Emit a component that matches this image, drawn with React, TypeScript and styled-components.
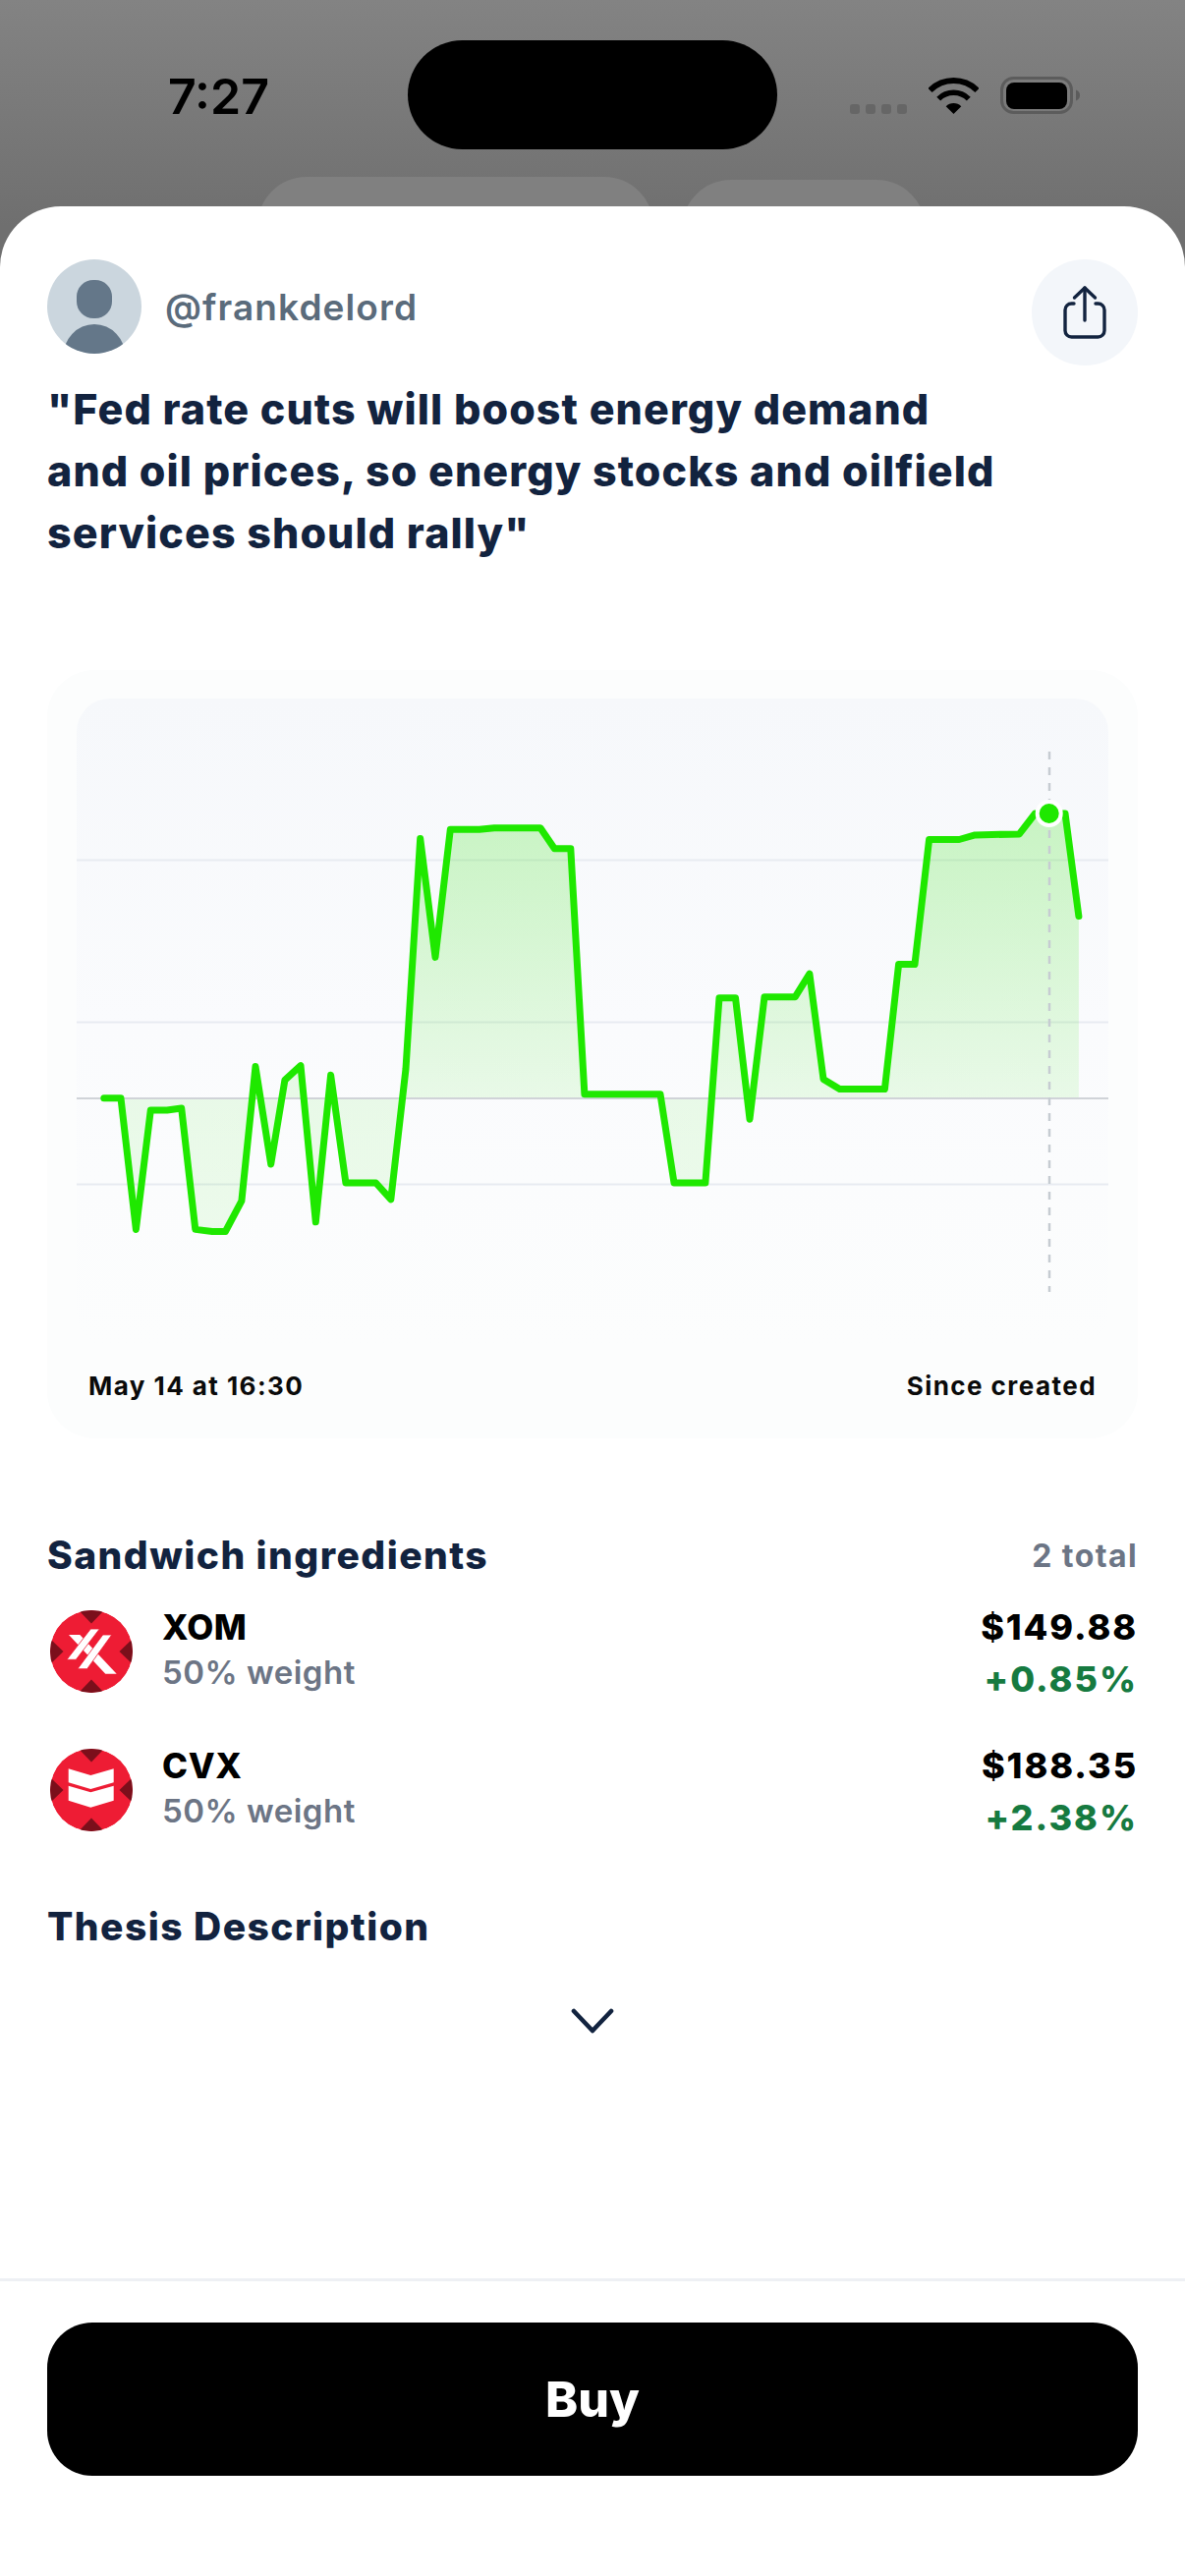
import React from "react";
import styled, { createGlobalStyle } from "styled-components";

const Global = createGlobalStyle`
  html, body { margin: 0; padding: 0; background: #fff; }
  * { box-sizing: border-box; }
  body { font-family: "Inter", "Liberation Sans", sans-serif; }
`;

const Page = styled.div`
  width: 1206px;
  height: 2622px;
  overflow: hidden;
  display: flex;
  flex-direction: column;
  background: linear-gradient(180deg, #838383 0px, #6f6f6f 230px);
`;
const Backdrop = styled.div`
  height: 210px;
  flex: none;
  overflow: hidden;
`;
const StatusBar = styled.div`
  display: grid;
  grid-template-columns: 415px 376px 1fr;
  padding-top: 41px;
  height: 152px;
`;
const TimeSlot = styled.div`
  padding: 29px 0 0 171px;
`;
const Time = styled.div`
  font-family: "Inter", sans-serif;
  font-size: 50px;
  font-weight: 600;
  line-height: 56px;
  color: #000;
`;
const Island = styled.div`
  background: #000;
  border-radius: 56px;
  height: 111px;
`;
const StatusIcons = styled.div`
  display: flex;
  align-items: flex-end;
  padding: 37px 0 0 74px;
  height: 76px;
`;
const SignalDots = styled.div`
  display: flex;
  gap: 6px;
  margin-bottom: 1px;
`;
const SignalDot = styled.span`
  width: 10px;
  height: 10px;
  border-radius: 3px;
  background: #666;
`;
const WifiIcon = styled.svg`
  margin: 0 22px 1px 22px;
  display: block;
`;
const BatteryIcon = styled.svg`
  display: block;
`;
const GhostRow = styled.div`
  display: flex;
  gap: 29px;
  padding-left: 262px;
  margin-top: 28px;
`;
const GhostTab = styled.div<{ $w: number; $nudge: number }>`
  width: ${(p) => p.$w}px;
  height: 100px;
  margin-top: ${(p) => p.$nudge}px;
  border-radius: 56px;
  background: #808080;
`;

const Sheet = styled.div`
  flex: 1;
  background: #fff;
  border-radius: 62px 62px 0 0;
  display: flex;
  flex-direction: column;
`;
const Body = styled.div`
  flex: 1;
  padding: 54px 48px 0;
  display: flex;
  flex-direction: column;
`;
const AuthorRow = styled.div`
  display: flex;
  justify-content: space-between;
  align-items: flex-start;
`;
const Author = styled.div`
  display: flex;
  align-items: center;
  gap: 24px;
`;
const Avatar = styled.svg`
  display: block;
`;
const Handle = styled.span`
  font-size: 37px;
  font-weight: 600;
  color: #5a6b7b;
  letter-spacing: 1.1px;
`;
const ShareButton = styled.button`
  width: 108px;
  height: 108px;
  border: 0;
  padding: 0;
  border-radius: 50%;
  background: #f3f6fa;
  display: flex;
  align-items: center;
  justify-content: center;
`;
const Title = styled.h1`
  margin: 13px 0 0;
  font-size: 43px;
  line-height: 63px;
  font-weight: 800;
  color: #12233f;
  letter-spacing: 1.1px;
`;
const ChartCard = styled.div`
  margin-top: 108px;
  height: 782px;
  border-radius: 48px;
  padding: 29px 30px 0;
  background: #fcfdfd;
`;
const Plot = styled.div`
  height: 660px;
  border-radius: 34px;
  background: linear-gradient(180deg, #f6f8fb 0%, #fafbfd 50%, #fcfdfd 100%);
`;
const ChartSvg = styled.svg`
  display: block;
`;
const ChartLabels = styled.div`
  display: flex;
  justify-content: space-between;
  padding: 24px 12px 0;
`;
const ChartLabel = styled.span`
  font-size: 26px;
  line-height: 32px;
  font-weight: 700;
  color: #0a0a0a;
  letter-spacing: 1.45px;
`;
const SectionHead = styled.div<{ $top: number }>`
  display: flex;
  justify-content: space-between;
  align-items: center;
  margin-top: ${(p) => p.$top}px;
  height: 46px;
`;
const SectionTitle = styled.h2`
  margin: 0;
  font-size: 39px;
  line-height: 46px;
  font-weight: 800;
  color: #12233f;
  letter-spacing: 1.45px;
`;
const SectionCount = styled.span`
  font-size: 32px;
  font-weight: 700;
  color: #6c7585;
  letter-spacing: 1.4px;
`;
const Holdings = styled.div`
  display: flex;
  flex-direction: column;
  gap: 57px;
  margin-top: 33px;
`;
const Holding = styled.div`
  display: flex;
  align-items: flex-start;
  height: 84px;
  padding-left: 3px;
`;
const Logo = styled.svg`
  display: block;
  flex: none;
`;
const Info = styled.div`
  flex: 1;
  margin-left: 30px;
  display: flex;
  flex-direction: column;
  gap: 9px;
`;
const Ticker = styled.span`
  font-size: 35px;
  line-height: 34px;
  font-weight: 800;
  color: #000;
  letter-spacing: 0.6px;
`;
const Weight = styled.span`
  font-size: 33px;
  line-height: 40px;
  font-weight: 600;
  color: #6c7585;
  letter-spacing: 0.5px;
`;
const Quote = styled.div`
  display: flex;
  flex-direction: column;
  align-items: flex-end;
  gap: 18px;
`;
const Price = styled.span`
  font-size: 36px;
  line-height: 34px;
  font-weight: 800;
  color: #000;
  letter-spacing: 1.9px;
`;
const Change = styled.span`
  font-size: 36px;
  line-height: 36px;
  font-weight: 800;
  color: #167a40;
  letter-spacing: 2px;
`;
const Expand = styled.div`
  display: flex;
  justify-content: center;
  margin-top: 60px;
`;
const Footer = styled.div`
  border-top: 3px solid #eef0f4;
  padding: 42px 48px 102px;
`;
const BuyButton = styled.button`
  width: 100%;
  height: 156px;
  border: 0;
  border-radius: 46px;
  background: #000;
  color: #fff;
  font-family: "Inter", sans-serif;
  font-size: 50px;
  font-weight: 800;
`;

const points: [number, number][] = [
  [105.8, 1117.8], [123, 1117.8], [138.4, 1251.4], [153.3, 1130], [170, 1130], [184.7, 1128],
  [198.8, 1251.4], [216, 1253.5], [229.4, 1253.5], [245.9, 1222.3], [260, 1085.6], [275.7, 1185],
  [289.9, 1099.4], [306, 1084.6], [321.3, 1243.8], [336.6, 1094.3], [351.9, 1204], [382.5, 1204],
  [397.8, 1220.8], [413, 1088], [427.7, 853.5], [443, 974.4], [458.3, 844.3], [487.8, 844.3],
  [503, 842.8], [550, 842.8], [564.3, 863.7], [580.8, 863.7], [594.9, 1113.7], [672, 1113.7],
  [686, 1204], [717.9, 1204], [732, 1015.7], [748.5, 1015.7], [763, 1139.2], [778, 1014.7],
  [809.3, 1014.7], [823.9, 991.2], [838, 1098.4], [854.5, 1108.6], [900.4, 1108.6], [914.6, 981.5],
  [931, 981.5], [945.6, 854.5], [976.2, 854.5], [992.3, 849.9], [1037.4, 848.9], [1053.5, 828],
  [1067.7, 828], [1084, 828], [1097.9, 932.6],
];
const linePts = points.map((p) => p.join(",")).join(" ");
const areaPts = `${linePts} 1097.9,1118 105.8,1118`;

const Chart = () => (
  <ChartSvg width={1050} height={660} viewBox="78 711 1050 660">
    <defs>
      <linearGradient id="area" gradientUnits="userSpaceOnUse" x1="0" y1="840" x2="0" y2="1260">
        <stop offset="0" stopColor="#25e000" stopOpacity="0.22" />
        <stop offset="0.66" stopColor="#25e000" stopOpacity="0.085" />
        <stop offset="1" stopColor="#25e000" stopOpacity="0.07" />
      </linearGradient>
    </defs>
    <line x1="78" x2="1128" y1="875.5" y2="875.5" stroke="#e8ebf1" strokeWidth="2" />
    <line x1="78" x2="1128" y1="1040.5" y2="1040.5" stroke="#e8ebf1" strokeWidth="2" />
    <line x1="78" x2="1128" y1="1205.5" y2="1205.5" stroke="#e8ebf1" strokeWidth="2" />
    <polygon points={areaPts} fill="url(#area)" />
    <line x1="78" x2="1128" y1="1118" y2="1118" stroke="#d0d3d8" strokeWidth="2" />
    <line x1="1068" x2="1068" y1="765" y2="1315" stroke="#c6ccd2" strokeWidth="2.5" strokeDasharray="8 8" />
    <polyline points={linePts} fill="none" stroke="#1fe800" strokeWidth="7" strokeLinejoin="round" strokeLinecap="round" />
    <circle cx="1067.7" cy="828" r="14" fill="#fff" />
    <circle cx="1067.7" cy="828" r="10" fill="#1fe800" />
  </ChartSvg>
);

const Badges = () => (
  <>
    <circle cx="42" cy="42" r="42" fill="#ee1c34" />
    <polygon points="29,0 55,0 42,13.5" fill="#7b0f1b" />
    <polygon points="29,84 55,84 42,70.5" fill="#7b0f1b" />
    <polygon points="0,29 13.5,42 0,55" fill="#7b0f1b" />
    <polygon points="84,29 70.5,42 84,55" fill="#7b0f1b" />
  </>
);

const XomLogo = () => (
  <Logo width={84} height={84} viewBox="0 0 84 84">
    <clipPath id="xomClip"><circle cx="42" cy="42" r="42" /></clipPath>
    <g clipPath="url(#xomClip)">
      <Badges />
      <polygon points="19,25 30.3,25 67.7,64.7 56.3,64.7" fill="#fff" />
      <polygon points="41.3,19 50.3,19 26.3,50.3 17,50.3" fill="#fff" stroke="#ee1c34" strokeWidth="0.8" />
      <polygon points="53.7,25 62.7,25 37.7,59.7 28,59.7" fill="#fff" stroke="#ee1c34" strokeWidth="0.8" />
    </g>
  </Logo>
);

const CvxLogo = () => (
  <Logo width={84} height={84} viewBox="0 0 84 84">
    <clipPath id="cvxClip"><circle cx="42" cy="42" r="42" /></clipPath>
    <g clipPath="url(#cvxClip)">
      <Badges />
      <polygon points="18.7,20.3 41.3,27 64.7,20.3 64.7,34.3 41.3,41 18.7,34.3" fill="#fff" />
      <polygon points="18.7,37.7 41.3,44.3 64.7,37.7 64.7,52.7 41.3,59.7 18.7,52.7" fill="#fff" />
    </g>
  </Logo>
);

const holdings = [
  { ticker: "XOM", price: "$149.88", change: "+0.85%", Logo: XomLogo },
  { ticker: "CVX", price: "$188.35", change: "+2.38%", Logo: CvxLogo },
];

export default function App() {
  return (
    <Page>
      <Global />
      <Backdrop>
        <StatusBar>
          <TimeSlot>
            <Time>7:27</Time>
          </TimeSlot>
          <Island />
          <StatusIcons>
            <SignalDots>
              <SignalDot />
              <SignalDot />
              <SignalDot />
              <SignalDot />
            </SignalDots>
            <WifiIcon width={51} height={37} viewBox="0 0 51 37">
              <path d="M1.46 12.96A34 34 0 0 1 49.54 12.96" fill="none" stroke="#000" strokeWidth="6" />
              <path d="M10.2 21.66A21.7 21.7 0 0 1 40.8 21.66" fill="none" stroke="#000" strokeWidth="5.5" />
              <path d="M25.5 37L17.7 29.2A11 11 0 0 1 33.3 29.2Z" fill="#000" />
            </WifiIcon>
            <BatteryIcon width={82} height={39} viewBox="0 0 82 39">
              <rect x="1.5" y="1.5" width="71" height="35" rx="12" fill="none" stroke="#5c5c5c" strokeWidth="3" />
              <rect x="6" y="6" width="62" height="27" rx="8" fill="#000" />
              <path d="M77 13.5C80 14.5 81 16.5 81 19C81 21.5 80 23.5 77 24.5Z" fill="#5c5c5c" />
            </BatteryIcon>
          </StatusIcons>
        </StatusBar>
        <GhostRow>
          <GhostTab $w={403} $nudge={0} />
          <GhostTab $w={248} $nudge={3} />
        </GhostRow>
      </Backdrop>
      <Sheet>
        <Body>
          <AuthorRow>
            <Author>
              <Avatar width={96} height={96} viewBox="0 0 96 96">
                <clipPath id="avatarClip"><circle cx="48" cy="48" r="48" /></clipPath>
                <g clipPath="url(#avatarClip)">
                  <rect width="96" height="96" fill="#cbd6de" />
                  <rect x="30" y="21" width="36" height="39" rx="17" fill="#647789" />
                  <ellipse cx="48" cy="100" rx="32" ry="34" fill="#647789" />
                </g>
              </Avatar>
              <Handle>@frankdelord</Handle>
            </Author>
            <ShareButton aria-label="Share">
              <svg width="44" height="56" viewBox="0 0 44 56" fill="none" stroke="#12233f" strokeWidth="3.4" strokeLinecap="round" strokeLinejoin="round">
                <path d="M22 3V36" />
                <path d="M11.5 13L22 3L32.5 13" />
                <path d="M11 19H8.5a6.5 6.5 0 0 0-6.5 6.5V46.5a6.5 6.5 0 0 0 6.5 6.5H35.5a6.5 6.5 0 0 0 6.5-6.5V25.5a6.5 6.5 0 0 0-6.5-6.5H33" />
              </svg>
            </ShareButton>
          </AuthorRow>
          <Title>
            "Fed rate cuts will boost energy demand
            <br />
            and oil prices, so energy stocks and oilfield
            <br />
            services should rally"
          </Title>
          <ChartCard>
            <Plot>
              <Chart />
            </Plot>
            <ChartLabels>
              <ChartLabel>May 14 at 16:30</ChartLabel>
              <ChartLabel>Since created</ChartLabel>
            </ChartLabels>
          </ChartCard>
          <SectionHead $top={96}>
            <SectionTitle>Sandwich ingredients</SectionTitle>
            <SectionCount>2 total</SectionCount>
          </SectionHead>
          <Holdings>
            {holdings.map((h) => (
              <Holding key={h.ticker}>
                <h.Logo />
                <Info>
                  <Ticker>{h.ticker}</Ticker>
                  <Weight>50% weight</Weight>
                </Info>
                <Quote>
                  <Price>{h.price}</Price>
                  <Change>{h.change}</Change>
                </Quote>
              </Holding>
            ))}
          </Holdings>
          <SectionHead $top={74}>
            <SectionTitle>Thesis Description</SectionTitle>
          </SectionHead>
          <Expand>
            <svg width="44" height="26" viewBox="0 0 44 26" fill="none" stroke="#12233f" strokeWidth="4.6" strokeLinecap="round" strokeLinejoin="round">
              <path d="M3 3L22 23L41 3" />
            </svg>
          </Expand>
        </Body>
        <Footer>
          <BuyButton>Buy</BuyButton>
        </Footer>
      </Sheet>
    </Page>
  );
}
